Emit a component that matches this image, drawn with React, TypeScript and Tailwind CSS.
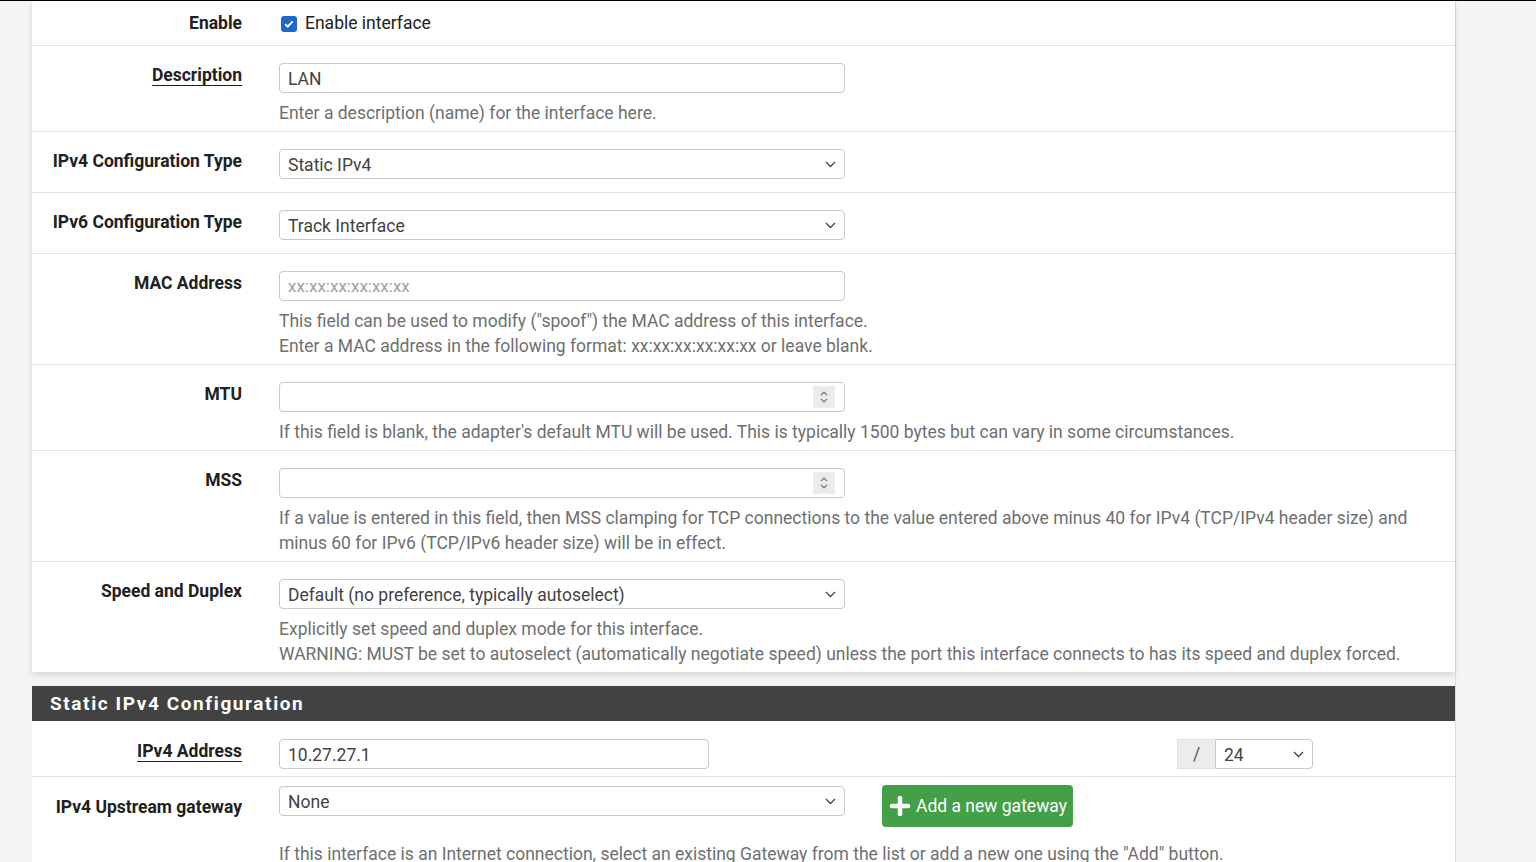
import React from 'react';

const font = { fontFamily: 'Roboto, "Noto Sans", Arial, sans-serif' };

function Chevron() {
  return (
    <svg width="11" height="7" viewBox="0 0 11 7" className="shrink-0">
      <path d="M1 1l4.5 4.5L10 1" fill="none" stroke="#444" strokeWidth="1.3" />
    </svg>
  );
}

function Select({ value, w = 'w-[566px]' }: { value: string; w?: string }) {
  return (
    <div className={`${w} h-[30px] flex items-center justify-between border border-[#c8c8c8] rounded-[4px] bg-white pl-[8px] pr-[8px] text-[#424242]`}>
      <span className="pt-[2px]">{value}</span>
      <Chevron />
    </div>
  );
}

function TextInput({ value, placeholder, w = 'w-[566px]' }: { value?: string; placeholder?: string; w?: string }) {
  return (
    <div className={`${w} h-[30px] flex items-center border border-[#c8c8c8] rounded-[4px] bg-white px-[8px]`}>
      {value ? (
        <span className="text-[#424242] pt-[2px]">{value}</span>
      ) : (
        <span className="text-[#a0a0a0] text-[17px] pt-[1px]">{placeholder}</span>
      )}
    </div>
  );
}

function NumberInput() {
  return (
    <div className="w-[566px] h-[30px] flex items-center justify-end border border-[#c8c8c8] rounded-[4px] bg-white pr-[9px]">
      <div className="w-[22px] h-[22px] bg-[#ececec] flex items-center justify-center">
        <svg width="10" height="16" viewBox="0 0 10 16">
          <path d="M2 6l3-3 3 3M2 10l3 3 3-3" fill="none" stroke="#777" strokeWidth="1.2" />
        </svg>
      </div>
    </div>
  );
}

function Help({ children }: { children: React.ReactNode }) {
  return <div className="mt-[8px] text-[#6f6f6f] leading-[25px]">{children}</div>;
}

function Row({
  label,
  underline,
  children,
  pt = 'pt-[17px]',
  pb = 'pb-[5px]',
  labelPt = 'pt-[17px]',
  last,
}: {
  label: string;
  underline?: boolean;
  children: React.ReactNode;
  pt?: string;
  pb?: string;
  labelPt?: string;
  last?: boolean;
}) {
  return (
    <div className={`flex ${last ? '' : 'border-b border-[#e3e3e3]'}`}>
      <div className={`w-[229px] shrink-0 text-right pr-[19px] ${labelPt} font-bold text-[#212121] leading-[25px]`}>
        <span className={underline ? 'underline underline-offset-[4px] decoration-1' : ''}>{label}</span>
      </div>
      <div className={`flex-1 pl-[18px] pr-[18px] ${pt} ${pb}`}>{children}</div>
    </div>
  );
}

export default function App() {
  return (
    <div className="min-h-[862px] bg-[#f4f4f4] border-t border-black text-[17.5px] leading-[25px]" style={font}>
      <div className="ml-[32px] w-[1424px] min-h-[861px] border-r border-[#dcdcdc]">
        {/* General configuration */}
        <div className="bg-white shadow-[0_3px_6px_rgba(0,0,0,0.12)]">
          <Row label="Enable" pt="pt-[10px]" pb="pb-[9px]" labelPt="pt-[10px]">
            <div className="flex items-center h-[25px]">
              <div className="ml-[2px] w-[16px] h-[16px] rounded-[3px] bg-[#1b68c8] flex items-center justify-center">
                <svg width="12" height="12" viewBox="0 0 12 12">
                  <path d="M2.2 6.2l2.5 2.4 5-5.2" fill="none" stroke="white" strokeWidth="2" />
                </svg>
              </div>
              <span className="ml-[8px] text-[#212121]">Enable interface</span>
            </div>
          </Row>
          <Row label="Description" underline>
            <TextInput value="LAN" />
            <Help>Enter a description (name) for the interface here.</Help>
          </Row>
          <Row label="IPv4 Configuration Type" pb="pb-[13px]">
            <Select value="Static IPv4" />
          </Row>
          <Row label="IPv6 Configuration Type" pb="pb-[13px]">
            <Select value="Track Interface" />
          </Row>
          <Row label="MAC Address">
            <TextInput placeholder="xx:xx:xx:xx:xx:xx" />
            <Help>
              This field can be used to modify ("spoof") the MAC address of this interface.
              <br />
              Enter a MAC address in the following format: xx:xx:xx:xx:xx:xx or leave blank.
            </Help>
          </Row>
          <Row label="MTU">
            <NumberInput />
            <Help>
              If this field is blank, the adapter's default MTU will be used. This is typically 1500 bytes but can vary in some circumstances.
            </Help>
          </Row>
          <Row label="MSS">
            <NumberInput />
            <Help>
              If a value is entered in this field, then MSS clamping for TCP connections to the value entered above minus 40 for IPv4 (TCP/IPv4 header size) and minus 60 for IPv6 (TCP/IPv6 header size) will be in effect.
            </Help>
          </Row>
          <Row label="Speed and Duplex" last>
            <Select value="Default (no preference, typically autoselect)" />
            <Help>
              Explicitly set speed and duplex mode for this interface.
              <br />
              WARNING: MUST be set to autoselect (automatically negotiate speed) unless the port this interface connects to has its speed and duplex forced.
            </Help>
          </Row>
        </div>

        {/* Static IPv4 */}
        <div className="mt-[14px] bg-white">
          <div className="h-[35px] bg-[#424242] flex items-center pl-[18px] text-white font-bold text-[19px] tracking-[1.6px]">
            Static IPv4 Configuration
          </div>
          <Row label="IPv4 Address" underline pt="pt-[18px]" pb="pb-[7px]" labelPt="pt-[18px]">
            <div className="flex items-center">
              <TextInput value="10.27.27.1" w="w-[430px]" />
              <div className="ml-[468px] flex">
                <div className="w-[38px] h-[30px] bg-[#ececec] border-y border-l border-[#e0e0e0] flex items-center justify-center text-[#555]">
                  /
                </div>
                <div className="w-[98px] h-[30px] flex items-center justify-between border border-[#c8c8c8] rounded-r-[4px] bg-white pl-[8px] pr-[8px] text-[#424242]">
                  <span className="pt-[2px]">24</span>
                  <Chevron />
                </div>
              </div>
            </div>
          </Row>
          <Row label="IPv4 Upstream gateway" pt="pt-[8px]" labelPt="pt-[18px]" last>
            <div className="flex items-start">
              <div className="mt-[1px]">
                <Select value="None" />
              </div>
              <div className="ml-[37px] w-[191px] h-[42px] rounded-[4px] bg-[#43a047] flex items-center pl-[8px] text-white">
                <svg width="20" height="20" viewBox="0 0 20 20">
                  <path d="M10 2v16M2 10h16" stroke="white" strokeWidth="4.5" strokeLinecap="round" />
                </svg>
                <span className="ml-[6px]">Add a new gateway</span>
              </div>
            </div>
            <div className="mt-[15px] text-[#6f6f6f] leading-[25px]">
              If this interface is an Internet connection, select an existing Gateway from the list or add a new one using the "Add" button.
            </div>
          </Row>
        </div>
      </div>
    </div>
  );
}
